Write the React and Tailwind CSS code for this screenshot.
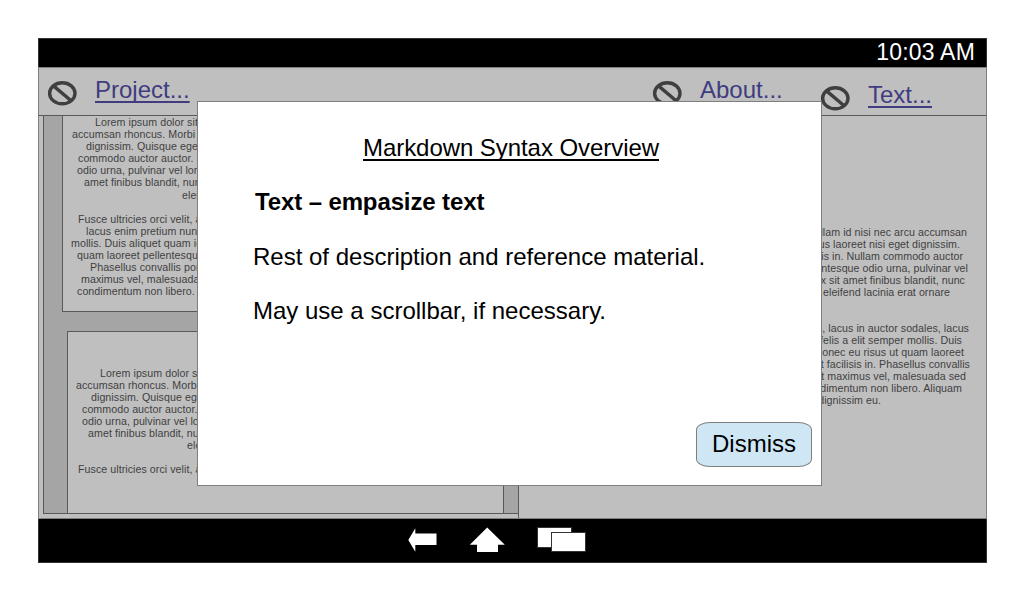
import React from "react";

const FIRST_PAGE = [
  ["pl-[32px]", "Lorem ipsum dolor sit amet,"],
  ["pl-[9px]", "accumsan rhoncus. Morbi lobortis"],
  ["pl-[23px]", "dignissim. Quisque eget nisl"],
  ["pl-[15px]", "commodo auctor auctor. Nulla"],
  ["pl-[14px]", "odio urna, pulvinar vel lorem"],
  ["pl-[21px]", "amet finibus blandit, nunc"],
  ["pl-[119px]", "eleifend"],
  ["", "\u00a0"],
  ["pl-[15px]", "Fusce ultricies orci velit, a"],
  ["pl-[23px]", "lacus enim pretium nunc"],
  ["pl-[8px]", "mollis. Duis aliquet quam id"],
  ["pl-[14px]", "quam laoreet pellentesque"],
  ["pl-[27px]", "Phasellus convallis porta"],
  ["pl-[18px]", "maximus vel, malesuada"],
  ["pl-[14px]", "condimentum non libero."],
];

const SECOND_PAGE = [
  ["pl-[32px]", "Lorem ipsum dolor sit amet,"],
  ["pl-[8px]", "accumsan rhoncus. Morbi"],
  ["pl-[23px]", "dignissim. Quisque eget"],
  ["pl-[14px]", "commodo auctor auctor. Nulla"],
  ["pl-[14px]", "odio urna, pulvinar vel lorem"],
  ["pl-[20px]", "amet finibus blandit, nunc"],
  ["pl-[119px]", "eleifend"],
  ["", "\u00a0"],
  ["pl-[10px]", "Fusce ultricies orci velit, a"],
];

const PREVIEW = [
  ["pr-[19px]", "Nullam id nisi nec arcu accumsan"],
  ["pr-[26px]", "tellus laoreet nisi eget dignissim."],
  ["pr-[23px]", "felis in. Nullam commodo auctor"],
  ["pr-[18px]", "pellentesque odio urna, pulvinar vel"],
  ["pr-[21px]", "ex sit amet finibus blandit, nunc"],
  ["pr-[36px]", "eleifend lacinia erat ornare"],
  ["", "\u00a0"],
  ["", "\u00a0"],
  ["pr-[17px]", "sodales, lacus in auctor sodales, lacus"],
  ["pr-[24px]", "felis a elit semper mollis. Duis"],
  ["pr-[22px]", "Donec eu risus ut quam laoreet"],
  ["pr-[16px]", "ut facilisis in. Phasellus convallis"],
  ["pr-[20px]", "ut maximus vel, malesuada sed"],
  ["pr-[24px]", "condimentum non libero. Aliquam"],
  ["pr-[105px]", "dignissim eu."],
];

function Lines({ items, className }) {
  return (
    <div className={`text-[10.67px] whitespace-nowrap text-[#3f3f3f] ${className}`}>
      {items.map(([indent, text], i) => (
        <p key={i} className={indent}>{text}</p>
      ))}
    </div>
  );
}

function BlockedIcon({ className }) {
  return (
    <svg className={`h-[26px] w-[30px] shrink-0 ${className}`} viewBox="0 0 30 26" fill="none" stroke="#3f3f3f">
      <ellipse cx="15.3" cy="13.3" rx="12.7" ry="10.5" strokeWidth="3.4" />
      <path d="M6.5 5.9 24.1 20.7" strokeWidth="3.4" />
    </svg>
  );
}

function MenuLink({ className, children }) {
  return (
    <a className={`block h-7 text-[24px] leading-7 whitespace-nowrap text-[#3f3c80] underline decoration-2 underline-offset-[3px] [text-decoration-skip-ink:none] ${className}`}>
      {children}
    </a>
  );
}

export default function App() {
  return (
    <div className="h-[600px] w-[1024px] overflow-hidden bg-white pt-[38px] pl-[38px] font-['Liberation_Sans',Arial,sans-serif]">
      <div className="relative flex h-[525px] w-[949px] flex-col bg-[#bfbfbf]">
        <div className="flex h-[29px] shrink-0 justify-end border border-b-0 border-[#333] bg-black pr-[11px]">
          <span className="text-[23px] leading-[27px] tracking-[0.2px] text-white">10:03 AM</span>
        </div>

        <header className="flex h-[49px] shrink-0 items-start border border-[#7f7f7f] border-b-[#595959] pl-[8px]">
          <BlockedIcon className="mt-[12px]" />
          <MenuLink className="mt-[8px] ml-[18px] w-[95px]">Project...</MenuLink>
          <BlockedIcon className="mt-[12px] ml-[462px]" />
          <MenuLink className="mt-[8px] ml-[18px] w-[83px]">About...</MenuLink>
          <BlockedIcon className="mt-[17px] ml-[37px]" />
          <MenuLink className="mt-[13px] ml-[18px]">Text...</MenuLink>
        </header>

        <main className="flex h-[403px] shrink-0 border-x border-b border-[#7f7f7f]">
          <section className="flex w-[480px] shrink-0 items-start border-r border-[#595959] pl-[4px]">
            <div className="flex h-[398px] w-full flex-col border-b border-l border-[#595959] bg-[#a5a5a5]">
              <div className="ml-[18px] h-[196px] w-[436px] shrink-0 overflow-hidden border border-t-0 border-[#595959] bg-[#bfbfbf]">
                <Lines items={FIRST_PAGE} className="tracking-[0.05px] leading-[12.1px]" />
              </div>
              <div className="mt-[19px] ml-[23px] w-[437px] flex-1 overflow-hidden border border-b-0 border-[#595959] bg-[#bfbfbf] pt-[35px]">
                <Lines items={SECOND_PAGE} className="tracking-[0.05px] leading-[12px]" />
              </div>
            </div>
          </section>
          <section className="flex-1 overflow-hidden pt-[110px]">
            <Lines items={PREVIEW} className="text-right tracking-[0.05px] leading-[12px]" />
          </section>
        </main>

        <nav className="h-[44px] shrink-0 border border-t-0 border-[#333] bg-black pl-[368px]">
          <svg className="block h-[42px] w-[182px]" viewBox="407 519 182 42" fill="#fff">
            <path d="M408.3 540 415.3 528.3V533.5H436.5V545H415.3V551.7Z" />
            <path d="M487.2 527.5 504.8 544.7H498V552H477V544.7H469.8Z" />
            <g stroke="#333">
              <rect x="537.5" y="527.5" width="34" height="20" />
              <rect x="551.5" y="532.5" width="34" height="19" />
            </g>
          </svg>
        </nav>

        <div role="dialog" className="absolute top-[63px] left-[159px] flex h-[385px] w-[625px] flex-col border border-[#7f7f7f] bg-white text-[24px] leading-[28px] whitespace-nowrap text-black">
          <h1 className="mt-[32px] ml-[165px] w-max tracking-[-0.06px] underline decoration-2 underline-offset-[3px] [text-decoration-skip-ink:none]">Markdown Syntax Overview</h1>
          <h2 className="mt-[26px] ml-[57px] font-bold tracking-[-0.12px]">Text – empasize text</h2>
          <p className="mt-[27px] ml-[55px]">Rest of description and reference material.</p>
          <p className="mt-[26px] ml-[55px]">May use a scrollbar, if necessary.</p>
          <button className="mt-auto mr-[9px] mb-[18px] flex h-[45px] w-[116px] items-center justify-center self-end rounded-[14px/8px] border border-[#7f7f7f] bg-[#cfe7f5] pb-[2px]">
            Dismiss
          </button>
        </div>
      </div>
    </div>
  );
}
